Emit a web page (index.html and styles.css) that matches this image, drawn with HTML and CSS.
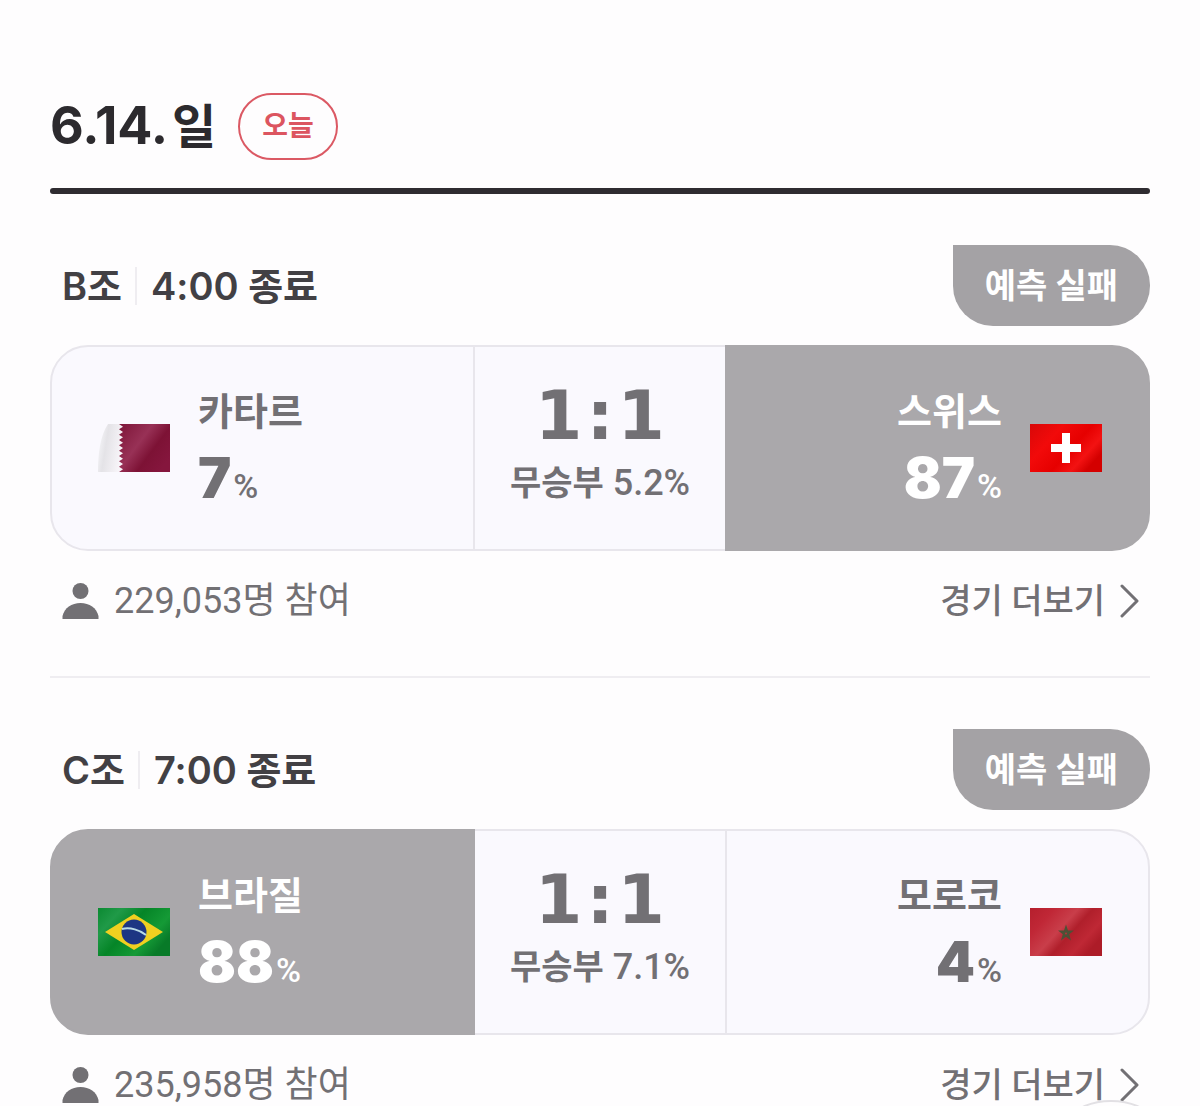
FILE: index.html
```html
<!DOCTYPE html>
<html lang="ko">
<head>
    <meta charset="UTF-8">
    <meta name="viewport" content="width=device-width, initial-scale=1.0">
    <title>경기 예측</title>
    <link rel="stylesheet" href="styles.css">
</head>
<body>
    <main class="schedule">
        <header class="day-header">
            <h1>6.14.<span class="weekday">일</span></h1>
            <span class="today">오늘</span>
        </header>

        <section class="match">
            <div class="match-header">
                <h2><span class="group">B조</span><span class="time">4:00 종료</span></h2>
                <span class="result-badge">예측 실패</span>
            </div>
            <div class="match-card">
                <div class="team home">
                    <svg class="flag" viewBox="0 0 72 48" role="img" aria-label="카타르 국기">
                        <defs>
                            <linearGradient id="qa-white" x1="0" y1="0" x2="1" y2="0.3">
                                <stop offset="0" stop-color="#fafafd"/>
                                <stop offset="0.4" stop-color="#e4e3e7"/>
                                <stop offset="1" stop-color="#f8f5f9"/>
                            </linearGradient>
                            <linearGradient id="qa-red" x1="0" y1="0" x2="1" y2="0.7">
                                <stop offset="0" stop-color="#7d1538"/>
                                <stop offset="0.45" stop-color="#983156"/>
                                <stop offset="0.7" stop-color="#7d1235"/>
                                <stop offset="1" stop-color="#85163d"/>
                            </linearGradient>
                        </defs>
                        <path fill="url(#qa-white)" d="M10 0H26V48H0C0 30 2 12 10 0Z"/>
                        <path fill="url(#qa-red)" d="M21 0H72V48H21L25 45.3 21 42.7 25 40 21 37.3 25 34.7 21 32 25 29.3 21 26.7 25 24 21 21.3 25 18.7 21 16 25 13.3 21 10.7 25 8 21 5.3 25 2.7Z"/>
                    </svg>
                    <div class="team-info">
                        <span class="name">카타르</span>
                        <span class="rate"><strong>7</strong>%</span>
                    </div>
                </div>
                <div class="score">
                    <span class="goals"><span>1</span><span>:</span><span>1</span></span>
                    <span class="draw"><b>무승부</b> 5.2%</span>
                </div>
                <div class="team away selected">
                    <svg class="flag" viewBox="0 0 72 48" role="img" aria-label="스위스 국기">
                        <defs>
                            <linearGradient id="ch-red" x1="0" y1="0" x2="1" y2="0.6">
                                <stop offset="0" stop-color="#d80808"/>
                                <stop offset="0.35" stop-color="#f20a0a"/>
                                <stop offset="0.65" stop-color="#e60000"/>
                                <stop offset="0.85" stop-color="#f31212"/>
                                <stop offset="1" stop-color="#d40000"/>
                            </linearGradient>
                        </defs>
                        <rect width="72" height="48" fill="url(#ch-red)"/>
                        <path fill="#fff" d="M32 9H40V20H51V28H40V39H32V28H21V20H32Z"/>
                    </svg>
                    <div class="team-info">
                        <span class="name">스위스</span>
                        <span class="rate"><strong>87</strong>%</span>
                    </div>
                </div>
            </div>
            <div class="match-footer">
                <span class="people">
                    <svg class="person" viewBox="0 0 36 38" aria-hidden="true">
                        <circle cx="18" cy="9" r="8"/>
                        <path d="M0 37V34C2 26 9 21 18 21S34 26 36 34V37Z"/>
                    </svg>
                    229,053명 참여
                </span>
                <a class="more" href="#">경기 더보기
                    <svg class="arrow" viewBox="0 0 20 36" aria-hidden="true"><path d="M2 3L17 18L2 33"/></svg>
                </a>
            </div>
        </section>

        <section class="match">
            <div class="match-header">
                <h2><span class="group">C조</span><span class="time">7:00 종료</span></h2>
                <span class="result-badge">예측 실패</span>
            </div>
            <div class="match-card">
                <div class="team home selected">
                    <svg class="flag" viewBox="0 0 72 48" role="img" aria-label="브라질 국기">
                        <defs>
                            <linearGradient id="br-green" x1="0" y1="0" x2="1" y2="0.6">
                                <stop offset="0" stop-color="#0b8a32"/>
                                <stop offset="0.25" stop-color="#209a48"/>
                                <stop offset="0.5" stop-color="#058527"/>
                                <stop offset="0.8" stop-color="#159a36"/>
                                <stop offset="1" stop-color="#087a28"/>
                            </linearGradient>
                        </defs>
                        <rect width="72" height="48" fill="url(#br-green)"/>
                        <path fill="#f0d020" d="M7 24L36 6L65 24L36 42Z"/>
                        <circle cx="36" cy="24" r="12.5" fill="#1d3683"/>
                        <path fill="none" stroke="#b9dbe6" stroke-width="2" d="M24 21C32 19 42 22 48 27"/>
                    </svg>
                    <div class="team-info">
                        <span class="name">브라질</span>
                        <span class="rate"><strong>88</strong>%</span>
                    </div>
                </div>
                <div class="score">
                    <span class="goals"><span>1</span><span>:</span><span>1</span></span>
                    <span class="draw"><b>무승부</b> 7.1%</span>
                </div>
                <div class="team away">
                    <svg class="flag" viewBox="0 0 72 48" role="img" aria-label="모로코 국기">
                        <defs>
                            <linearGradient id="ma-red" x1="0" y1="0" x2="1" y2="0.6">
                                <stop offset="0" stop-color="#b51f2d"/>
                                <stop offset="0.25" stop-color="#c02736"/>
                                <stop offset="0.5" stop-color="#c93e4a"/>
                                <stop offset="0.65" stop-color="#b01f2b"/>
                                <stop offset="0.85" stop-color="#bf2835"/>
                                <stop offset="1" stop-color="#ad1c28"/>
                            </linearGradient>
                        </defs>
                        <rect width="72" height="48" fill="url(#ma-red)"/>
                        <path fill="#4d5136" d="M36 16.5L38 22.5H44L39.2 26.2L41 32.5L36 28.8L31 32.5L32.8 26.2L28 22.5H34Z"/>
                        <circle cx="36" cy="25.4" r="1" fill="#b4323a"/>
                    </svg>
                    <div class="team-info">
                        <span class="name">모로코</span>
                        <span class="rate"><strong>4</strong>%</span>
                    </div>
                </div>
            </div>
            <div class="match-footer">
                <span class="people">
                    <svg class="person" viewBox="0 0 36 38" aria-hidden="true">
                        <circle cx="18" cy="9" r="8"/>
                        <path d="M0 37V34C2 26 9 21 18 21S34 26 36 34V37Z"/>
                    </svg>
                    235,958명 참여
                </span>
                <a class="more" href="#">경기 더보기
                    <svg class="arrow" viewBox="0 0 20 36" aria-hidden="true"><path d="M2 3L17 18L2 33"/></svg>
                </a>
            </div>
        </section>
    </main>
    <button type="button" class="top-button" aria-label="맨 위로"></button>
</body>
</html>
```
FILE: styles.css
```css
* {
    box-sizing: border-box;
}
body {
    margin: 0;
    background-color: #fefdfe;
    color: #727074;
    font-family: Inter, "Noto Sans CJK KR", sans-serif;
    font-size: 36px;
    line-height: 38px;
}
.schedule {
    padding: 92px 50px 0;
}
.day-header {
    display: flex;
    align-items: center;
    gap: 22px;
    padding-bottom: 28px;
    position: relative;
}
.day-header::after {
    content: "";
    position: absolute;
    left: 0;
    right: 0;
    bottom: -6px;
    height: 6px;
    border-radius: 3px;
    background-color: #2f2c31;
}
.day-header h1 {
    margin: 0;
    color: #2c2a2e;
    font-size: 52px;
    font-weight: 700;
    line-height: 67px;
}
.weekday {
    margin-left: 4px;
    font-size: 48px;
}
.today {
    padding: 0 22px;
    border: 2px solid #db5964;
    border-radius: 34px;
    color: #dc5560;
    font-size: 28px;
    font-weight: 700;
    line-height: 63px;
}
.match {
    padding-top: 57px;
}
.match + .match {
    margin-top: 56px;
    padding-top: 51px;
    border-top: 2px solid #efedf1;
}
.match-header {
    display: flex;
    align-items: center;
    justify-content: space-between;
    margin-bottom: 19px;
}
.match-header h2 {
    display: flex;
    margin: 0;
    padding-left: 12px;
    color: #424044;
    font-size: 38px;
    font-weight: 600;
}
.group {
    padding-right: 13px;
    border-right: 2px solid #efedf1;
}
.time {
    padding-left: 14px;
}
.result-badge {
    padding: 0 32px;
    border-radius: 0 40px 40px 40px;
    background-color: #a4a2a5;
    color: #fff;
    font-size: 34px;
    font-weight: 700;
    line-height: 81px;
}
.match-card {
    display: grid;
    grid-template-columns: 1fr 250px 1fr;
    height: 206px;
}
.team,
.score {
    display: flex;
    align-items: center;
    border: 2px solid #e8e6ec;
    background-color: #faf9fe;
}
.team {
    gap: 28px;
    padding: 0 46px;
}
.home {
    border-radius: 38px 0 0 38px;
}
.away {
    flex-direction: row-reverse;
    border-radius: 0 38px 38px 0;
    text-align: right;
}
.selected {
    border-color: #aaa8ab;
    background-color: #aaa8ab;
    color: #fff;
}
.flag {
    width: 72px;
    height: 48px;
}
.team-info {
    display: flex;
    flex-direction: column;
    gap: 29px;
}
.name {
    font-size: 38px;
    font-weight: 700;
}
.rate {
    font-family: Roboto, sans-serif;
    font-size: 34px;
    font-weight: 500;
}
.rate strong {
    margin-right: 2px;
    font-family: Inter, sans-serif;
    font-size: 56px;
    font-weight: 900;
}
.score {
    flex-direction: column;
    justify-content: center;
    gap: 18px;
    padding-bottom: 8px;
    border-right: 0;
    border-left: 0;
}
.goals {
    display: flex;
    gap: 4px;
    font-family: "DejaVu Sans", sans-serif;
    font-size: 68px;
    font-weight: 700;
    line-height: 60px;
}
.draw {
    font-family: Roboto, "Noto Sans CJK KR", sans-serif;
    font-weight: 500;
}
.draw b {
    font-size: 34px;
}
.match-footer {
    display: flex;
    justify-content: space-between;
    padding: 31px 10px 0 12px;
    font-family: Roboto, "Noto Sans CJK KR", sans-serif;
}
.people,
.more {
    display: flex;
    align-items: center;
    gap: 15px;
}
.person {
    width: 37px;
    height: 38px;
    fill: #727074;
}
.more {
    color: inherit;
    font-size: 34px;
    font-weight: 500;
    text-decoration: none;
}
.arrow {
    width: 20px;
    height: 36px;
    fill: none;
    stroke: #727074;
    stroke-width: 3;
    stroke-linecap: round;
    stroke-linejoin: round;
}
/* only the upper edge of the round button shows over the page */
.top-button {
    position: fixed;
    right: 19px;
    bottom: -134px;
    width: 140px;
    height: 140px;
    border: 2px solid #e2e0e4;
    border-radius: 50%;
    background-color: #fefdfe;
}
```
